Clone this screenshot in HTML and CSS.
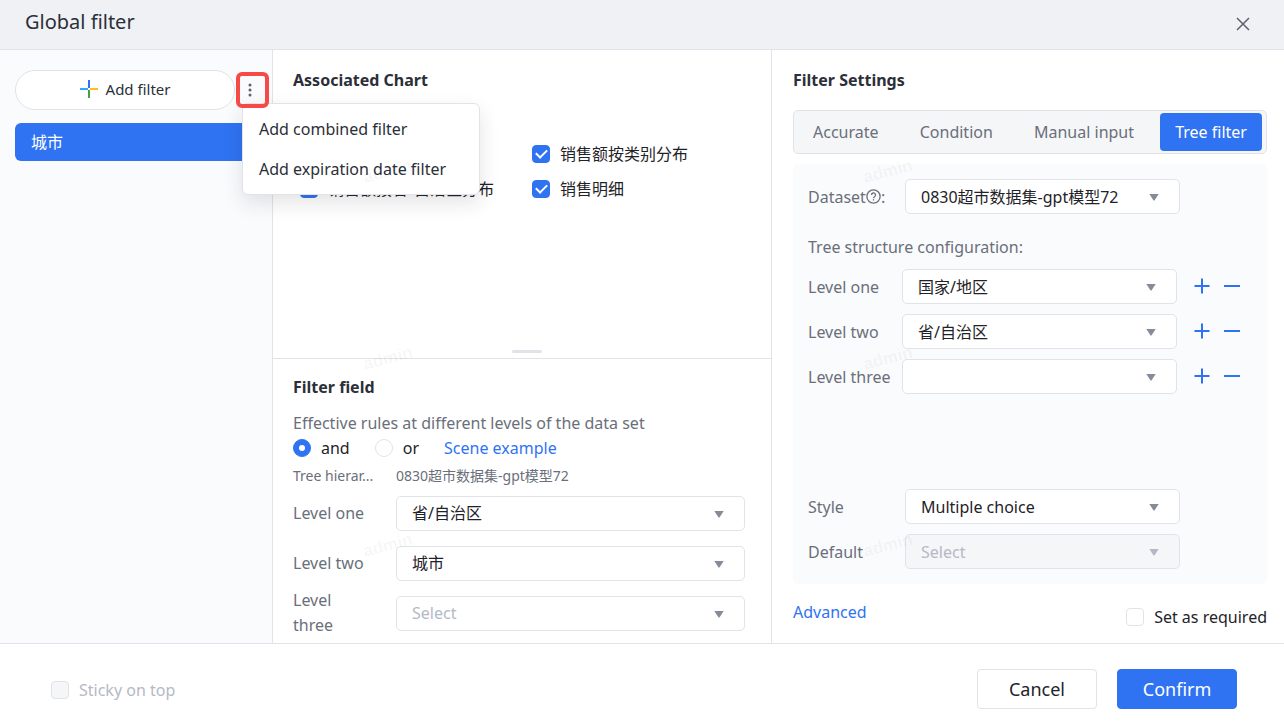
FILE: index.html
```html
<!DOCTYPE html>
<html lang="en">
<head>
<meta charset="utf-8">
<meta name="viewport" content="width=device-width, initial-scale=1">
<title>Global filter</title>
<link rel="stylesheet" href="styles.css">
</head>
<body>
<svg class="defs" width="0" height="0" aria-hidden="true">
  <symbol id="caret" viewBox="0 0 10 7"><path d="M.3 0h9.400L5.600 6.300Q5 7 4.400 6.300z" fill="currentColor"/></symbol>
  <symbol id="plus" viewBox="0 0 16 16"><path d="M8 .5v15M.5 8h15" stroke="currentColor" stroke-width="2"/></symbol>
  <symbol id="minus" viewBox="0 0 16 16"><path d="M0 8h16" stroke="currentColor" stroke-width="2"/></symbol>
</svg>
<div class="dialog" role="dialog" aria-labelledby="title">
  <header class="header">
    <h1 id="title" class="title">Global filter</h1>
    <button class="close" type="button" aria-label="Close">
      <svg width="14" height="14" viewBox="0 0 14 14"><path d="M1 1l12 12M13 1L1 13" stroke="#5b616e" stroke-width="1.500" fill="none"/></svg>
    </button>
  </header>

  <main class="columns">
    <aside class="sidebar">
      <div class="toolbar">
        <button class="add" type="button">
          <svg width="18" height="18" viewBox="0 0 18 18" stroke-width="2" fill="none"><path d="M9 0v8" stroke="#2f73f2"/><path d="M0 9h8" stroke="#2fa8ff"/><path d="M10 9h8" stroke="#ffbe1e"/><path d="M9 10v8" stroke="#3da43f"/></svg>
          Add filter
        </button>
        <div class="more-wrap">
          <button class="more" type="button" aria-label="More" aria-expanded="true">
            <svg width="4" height="14" viewBox="0 0 4 14" fill="#5b616e"><circle cx="2" cy="2" r="1.500"/><circle cx="2" cy="7" r="1.500"/><circle cx="2" cy="12" r="1.500"/></svg>
          </button>
          <div class="menu" role="menu">
            <button class="menu-item" type="button" role="menuitem">Add combined filter</button>
            <button class="menu-item" type="button" role="menuitem">Add expiration date filter</button>
          </div>
        </div>
      </div>
      <button class="filter-item" type="button">城市</button>
    </aside>

    <div class="middle">
      <section class="charts">
        <h2 class="heading">Associated Chart</h2>
        <div class="chart-grid">
          <label class="check second"><input class="box" type="checkbox" checked>销售额按类别分布</label>
          <label class="check"><input class="box" type="checkbox" checked>销售额按省/自治区分布</label>
          <label class="check"><input class="box" type="checkbox" checked>销售明细</label>
        </div>
        <div class="grip"></div>
      </section>
      <section class="fields">
        <h2 class="heading">Filter field</h2>
        <p class="rule">Effective rules at different levels of the data set</p>
        <div class="radios">
          <label class="radio-label"><input class="radio" type="radio" name="rule" checked>and</label>
          <label class="radio-label"><input class="radio" type="radio" name="rule">or</label>
          <a class="link" href="#">Scene example</a>
        </div>
        <div class="tree-head"><span class="tree-name">Tree hierar...</span><span>0830超市数据集-gpt模型72</span></div>
        <div class="field">
          <label class="field-label" for="f1">Level one</label>
          <div class="pick"><select class="select" id="f1"><option>省/自治区</option></select><svg class="caret"><use href="#caret"/></svg></div>
        </div>
        <div class="field">
          <label class="field-label" for="f2">Level two</label>
          <div class="pick"><select class="select" id="f2"><option>城市</option></select><svg class="caret"><use href="#caret"/></svg></div>
        </div>
        <div class="field">
          <label class="field-label" for="f3">Level three</label>
          <div class="pick"><select class="select empty" id="f3"><option>Select</option></select><svg class="caret"><use href="#caret"/></svg></div>
        </div>
      </section>
    </div>

    <section class="settings">
      <h2 class="heading">Filter Settings</h2>
      <div class="tabs" role="tablist">
        <button class="tab" type="button" role="tab">Accurate</button>
        <button class="tab" type="button" role="tab">Condition</button>
        <button class="tab" type="button" role="tab">Manual input</button>
        <button class="tab active" type="button" role="tab" aria-selected="true">Tree filter</button>
      </div>
      <div class="config">
        <div class="row">
          <label class="row-label" for="dataset">Dataset<svg class="help" width="15" height="15" viewBox="0 0 15 15" fill="none" stroke="#6a6f7a" stroke-width="1.300"><circle cx="7.500" cy="7.500" r="6.600"/><path d="M5.500 6a2 2 0 1 1 3 1.700q-1 .6-1 1.500"/><path d="M7.500 10.200v1.300"/></svg>:</label>
          <div class="pick"><select class="select" id="dataset"><option>0830超市数据集-gpt模型72</option></select><svg class="caret"><use href="#caret"/></svg></div>
        </div>
        <p class="structure">Tree structure configuration:</p>
        <div class="levels">
          <div class="row level">
            <label class="row-label" for="l1">Level one</label>
            <div class="pick"><select class="select" id="l1"><option>国家/地区</option></select><svg class="caret"><use href="#caret"/></svg></div>
            <div class="actions"><button class="icon" type="button" aria-label="Add level"><svg><use href="#plus"/></svg></button><button class="icon" type="button" aria-label="Remove level"><svg><use href="#minus"/></svg></button></div>
          </div>
          <div class="row level">
            <label class="row-label" for="l2">Level two</label>
            <div class="pick"><select class="select" id="l2"><option>省/自治区</option></select><svg class="caret"><use href="#caret"/></svg></div>
            <div class="actions"><button class="icon" type="button" aria-label="Add level"><svg><use href="#plus"/></svg></button><button class="icon" type="button" aria-label="Remove level"><svg><use href="#minus"/></svg></button></div>
          </div>
          <div class="row level">
            <label class="row-label" for="l3">Level three</label>
            <div class="pick"><select class="select" id="l3"><option></option></select><svg class="caret"><use href="#caret"/></svg></div>
            <div class="actions"><button class="icon" type="button" aria-label="Add level"><svg><use href="#plus"/></svg></button><button class="icon" type="button" aria-label="Remove level"><svg><use href="#minus"/></svg></button></div>
          </div>
        </div>
        <div class="display">
          <div class="row">
            <label class="row-label" for="style">Style</label>
            <div class="pick"><select class="select" id="style"><option>Multiple choice</option></select><svg class="caret"><use href="#caret"/></svg></div>
          </div>
          <div class="row">
            <label class="row-label" for="default">Default</label>
            <div class="pick"><select class="select" id="default" disabled><option>Select</option></select><svg class="caret"><use href="#caret"/></svg></div>
          </div>
        </div>
      </div>
      <div class="extra">
        <a class="link" href="#">Advanced</a>
        <label class="check required"><input class="box" type="checkbox">Set as required</label>
      </div>
    </section>
  </main>

  <footer class="footer">
    <label class="check sticky"><input class="box" type="checkbox" disabled>Sticky on top</label>
    <div class="buttons">
      <button class="button" type="button">Cancel</button>
      <button class="button primary" type="button">Confirm</button>
    </div>
  </footer>

  <div class="watermarks" aria-hidden="true">
    <span class="mark">admin</span><span class="mark">admin</span>
    <span class="mark">admin</span><span class="mark">admin</span>
    <span class="mark">admin</span><span class="mark">admin</span>
  </div>
</div>
</body>
</html>
```
FILE: styles.css
```css
* { box-sizing: border-box; }

body {
  margin: 0;
  color: #1f2329;
  font: 16px/24px "Noto Sans", "Noto Sans CJK SC", sans-serif;
}

button, select { font: inherit; color: inherit; }
button { padding: 0; border: 0; background: none; cursor: pointer; }
h1, h2, p { margin: 0; }
.defs { position: absolute; }

.dialog {
  position: relative;
  display: flex;
  flex-direction: column;
  min-height: 100vh;
  background: #fff;
}

.header {
  display: flex;
  align-items: center;
  justify-content: space-between;
  height: 50px;
  padding: 0 34px 6px 25px;
  border-bottom: 1px solid #e1e3e9;
  background: #f0f1f5;
}
.title { font-size: 20px; font-weight: 400; line-height: 28px; color: #2b2f38; }
.close { display: flex; padding-top: 4px; }

.columns {
  flex: 1;
  display: grid;
  grid-template-columns: 273px minmax(0, 1fr) 512px;
}

/* Filter list */
.sidebar {
  padding: 20px 0 0 15px;
  border-right: 1px solid #e1e3e9;
  background: #fafbfd;
}
.toolbar { display: flex; align-items: center; gap: 1px; padding-right: 3px; }
.add {
  flex: 1;
  display: flex;
  align-items: center;
  justify-content: center;
  gap: 8px;
  height: 40px;
  padding-bottom: 2px;
  border: 1px solid #e1e3e9;
  border-radius: 20px;
  background: #fff;
  font-size: 15px;
  color: #2b2f38;
}
.more-wrap { position: relative; }
.more {
  position: relative;
  z-index: 3;
  display: flex;
  align-items: center;
  width: 33px;
  height: 36px;
  padding-left: 8px;
  border: 4px solid #f54a45;
  border-radius: 6px;
}
.menu {
  position: absolute;
  z-index: 2;
  top: 31px;
  left: 6px;
  display: flex;
  flex-direction: column;
  padding: 5px 0;
  border: 1px solid #e1e3e9;
  border-radius: 6px;
  background: #fff;
  box-shadow: 0 8px 20px rgba(31, 35, 41, .12);
}
.menu-item {
  height: 40px;
  padding: 0 33px 0 16px;
  text-align: left;
  white-space: nowrap;
  color: #2b2f38;
}
.filter-item {
  display: block;
  width: 100%;
  height: 38px;
  margin-top: 13px;
  padding-left: 16px;
  border-radius: 6px 0 0 6px;
  background: #2f73f2;
  color: #fff;
  text-align: left;
}

/* Charts and fields */
.middle { display: flex; flex-direction: column; border-right: 1px solid #e1e3e9; }
.heading { font-size: 16px; font-weight: 700; line-height: 24px; color: #2b2f38; }
.charts {
  flex: 1;
  display: flex;
  flex-direction: column;
  padding: 18px 20px 0;
  border-bottom: 1px solid #e1e3e9;
}
.chart-grid {
  display: grid;
  grid-template-columns: 232px 1fr;
  row-gap: 11px;
  padding: 50px 0 0 7px;
}
.second { grid-column: 2; }
.grip { align-self: center; width: 30px; height: 3px; margin: auto 0 5px 10px; border-radius: 2px; background: #e1e3e9; }

.check { display: flex; align-items: center; gap: 10px; white-space: nowrap; }
.box, .radio {
  appearance: none;
  flex: none;
  display: grid;
  place-items: center;
  width: 18px;
  height: 18px;
  margin: 0;
  border: 1px solid #e1e3e9;
  background: #fff;
}
.box { border-radius: 4px; }
.box:checked, .radio:checked { border-color: #2f73f2; background: #2f73f2; }
.box:checked::before {
  content: "";
  width: 9px;
  height: 5px;
  margin-bottom: 3px;
  border: solid #fff;
  border-width: 0 0 2px 2px;
  transform: rotate(-45deg);
}
.box:disabled { background: #f5f6f8; }
.radio { border-radius: 50%; }
.radio:checked::before { content: ""; width: 6px; height: 6px; border-radius: 50%; background: #fff; }

.fields { padding: 16px 26px 5px 20px; }
.rule { margin-top: 12px; color: #6a6f7a; }
.radios { display: flex; align-items: center; gap: 25px; height: 26px; }
.radio-label { display: flex; align-items: center; gap: 10px; }
.link { color: #2f73f2; text-decoration: none; }
.tree-head { display: flex; gap: 16px; padding-top: 3px; color: #6a6f7a; font-size: 14px; }
.tree-name { width: 87px; white-space: nowrap; }
.field { display: flex; align-items: center; gap: 23px; min-height: 50px; }
.field-label { width: 80px; line-height: 25px; color: #6a6f7a; }

/* The caret shares the select's grid cell */
.pick { flex: 1; display: grid; align-items: center; }
.pick > * { grid-area: 1 / 1; }
.select {
  appearance: none;
  width: 100%;
  height: 35px;
  padding: 0 40px 0 15px;
  border: 1px solid #e1e3e9;
  border-radius: 5px;
  background: #fff;
}
.select.empty { color: #b4b9c5; }
.select:disabled { background: #f5f6f8; color: #b4b9c5; opacity: 1; }
.caret { justify-self: end; width: 10px; height: 7px; margin: 2px 21px 0 0; color: #858b99; pointer-events: none; }
.select:disabled + .caret { color: #b4b9c5; }

/* Settings */
.settings { display: flex; flex-direction: column; padding: 18px 17px 14px 21px; }
.tabs {
  display: flex;
  justify-content: space-between;
  margin-top: 18px;
  padding: 2px 4px;
  border: 1px solid #e1e3e9;
  border-radius: 5px;
  background: #f5f6f8;
}
.tab { height: 38px; padding: 0 15px; border-radius: 4px; color: #6a6f7a; white-space: nowrap; }
.tab.active { background: #2f73f2; color: #fff; }
.config {
  flex: 1;
  display: flex;
  flex-direction: column;
  margin-top: 10px;
  padding: 15px;
  border-radius: 5px;
  background: #fafbfd;
}
.row { display: flex; align-items: center; }
.row-label { display: flex; align-items: center; width: 97px; color: #6a6f7a; white-space: nowrap; }
.row .pick { flex: 0 1 275px; }
.level .row-label { width: 94px; }
.structure { margin: 21px 0 10px; color: #6a6f7a; }
.levels, .display { display: grid; gap: 10px; }
.display { margin-top: auto; }
.actions { display: flex; gap: 14px; padding: 0 0 2px 17px; }
.icon { display: flex; width: 16px; height: 16px; color: #2f73f2; }
.icon svg { width: 16px; height: 16px; }
.extra { display: flex; justify-content: space-between; margin-top: 16px; }
.required { padding-top: 5px; }

.footer {
  display: flex;
  align-items: center;
  justify-content: space-between;
  padding: 25px 47px 16px 51px;
  border-top: 1px solid #e1e3e9;
}
.sticky { padding-top: 2px; color: #b4b9c5; }
.buttons { display: flex; gap: 20px; }
.button {
  width: 120px;
  height: 40px;
  border: 1px solid #e1e3e9;
  border-radius: 4px;
  background: #fff;
  font-size: 18px;
}
.button.primary { border-color: #2f73f2; background: #2f73f2; color: #fff; }

.watermarks {
  position: absolute;
  z-index: 4;
  top: 160px;
  left: 363px;
  display: grid;
  grid-template-columns: 500px 48px;
  row-gap: 163px;
  pointer-events: none;
}
.mark {
  width: 48px;
  color: rgba(0, 0, 0, .05);
  font-family: "Liberation Sans", sans-serif;
  font-size: 17px;
  font-weight: 700;
  text-align: center;
  transform: rotate(-15deg);
}
```
